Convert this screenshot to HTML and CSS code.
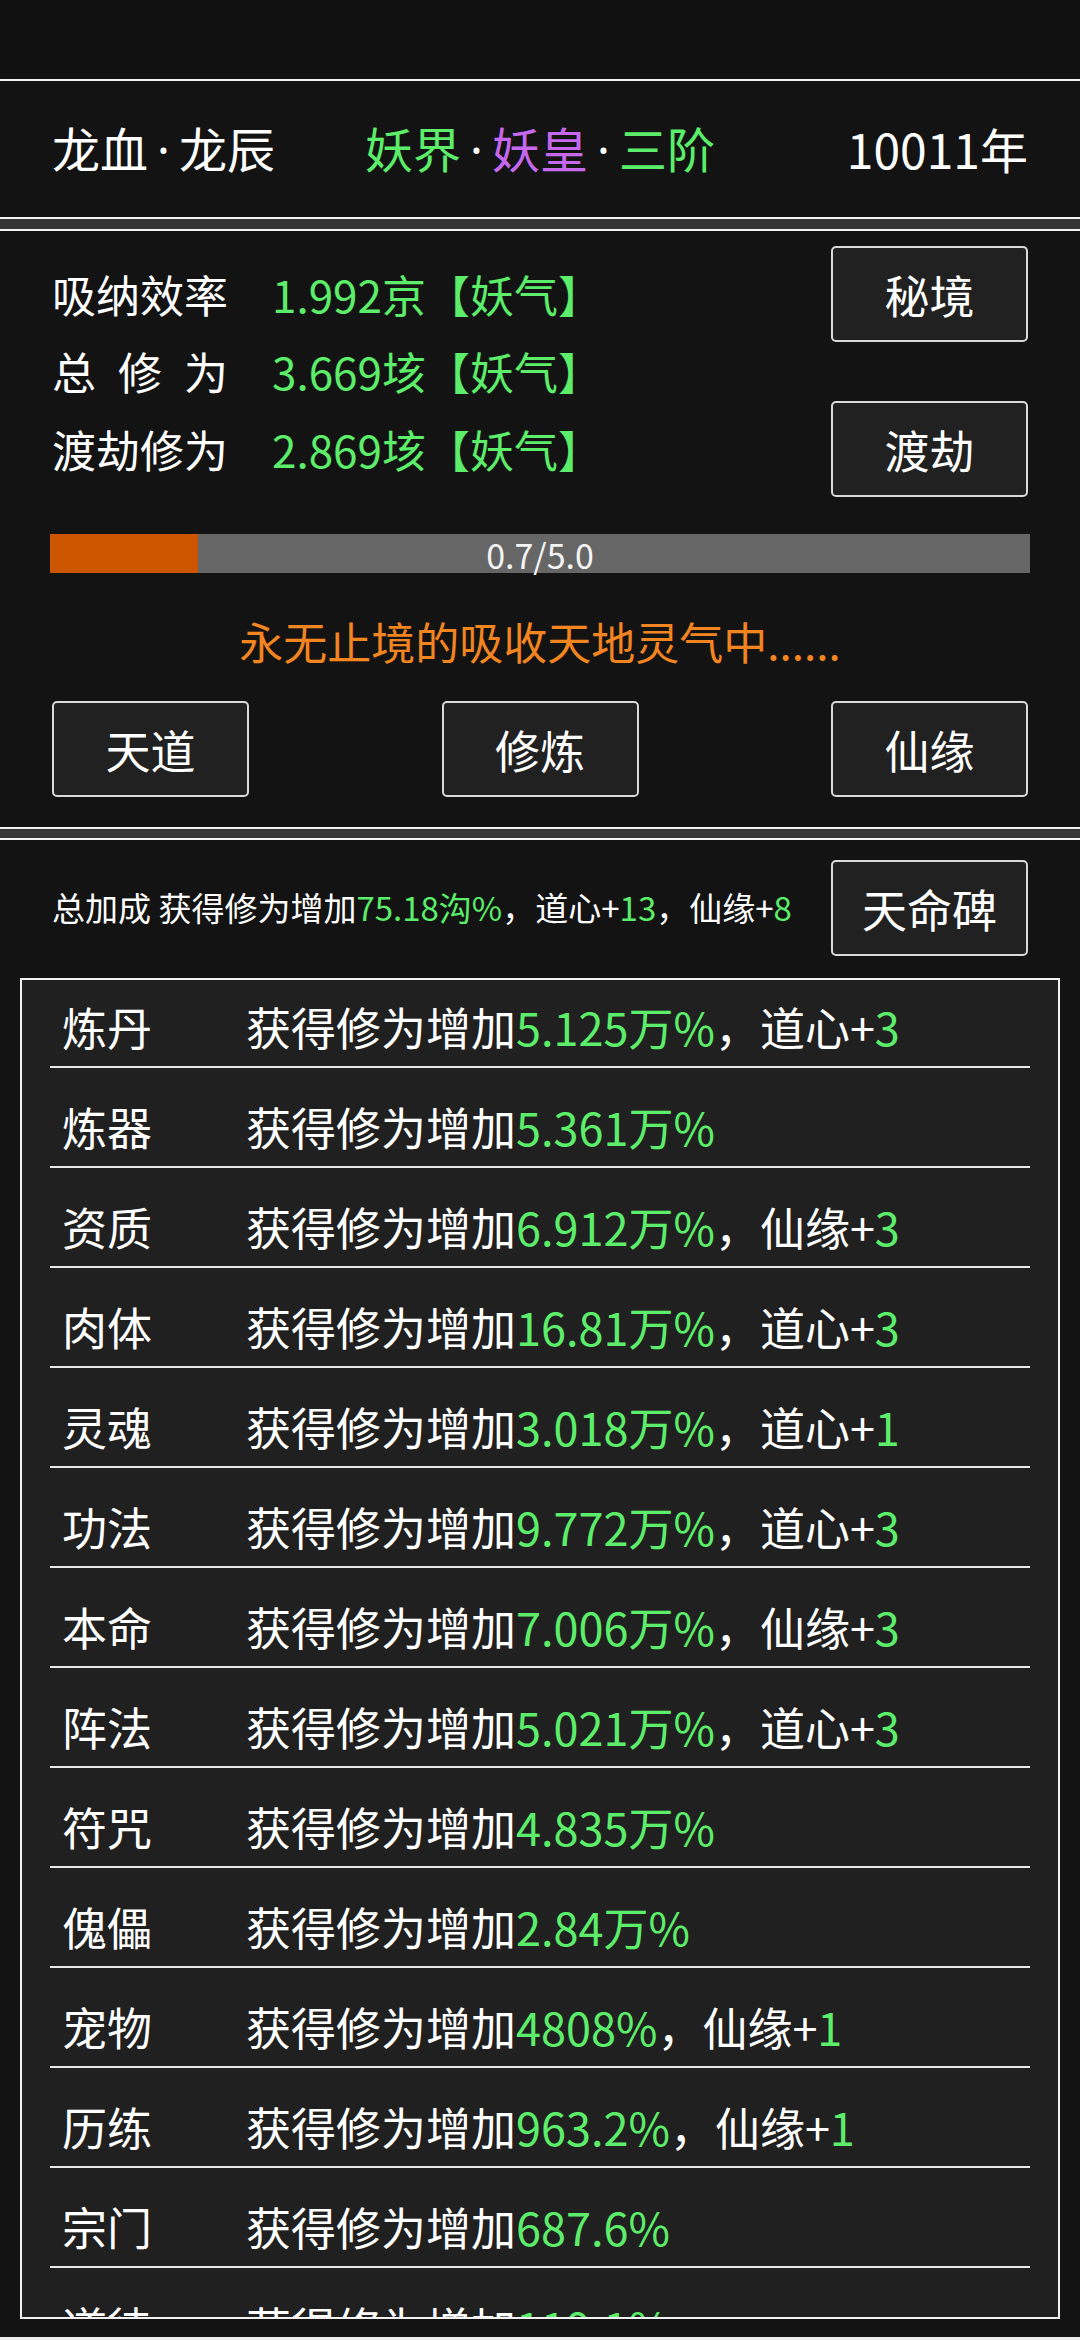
FILE: index.html
```html
<!DOCTYPE html>
<html lang="zh-CN">
<head>
<meta charset="utf-8">
<title>修仙</title>
<link rel="stylesheet" href="styles.css">
</head>
<body>
<div class="app">
  <div class="status"></div>

  <section class="panel head">
    <div class="head-left">龙血<span class="dot">·</span>龙辰</div>
    <div class="head-mid"><span class="g">妖界</span><span class="dot">·</span><span class="p">妖皇</span><span class="dot">·</span><span class="g">三阶</span></div>
    <div class="head-right">10011年</div>
  </section>

  <section class="panel main">
    <div class="stats">
      <div class="stat r1"><span class="lab">吸纳效率</span><span class="g">1.992京【妖气】</span></div>
      <div class="stat r2"><span class="lab just">总 修 为</span><span class="g">3.669垓【妖气】</span></div>
      <div class="stat r3"><span class="lab">渡劫修为</span><span class="g">2.869垓【妖气】</span></div>
      <button class="btn b1">秘境</button>
      <button class="btn b3">渡劫</button>
    </div>
    <div class="bar">
      <div class="bar-fill" style="width:15.1%"></div>
      <div class="bar-text">0.7/5.0</div>
    </div>
    <div class="msg">永无止境的吸收天地灵气中......</div>
    <div class="actions">
      <button class="btn">天道</button>
      <button class="btn">修炼</button>
      <button class="btn">仙缘</button>
    </div>
  </section>

  <section class="panel bonus">
    <div class="bonus-head">
      <div class="total">总加成 获得修为增加<span class="g">75.18沟%</span>，道心+<span class="g">13</span>，仙缘+<span class="g">8</span></div>
      <button class="btn">天命碑</button>
    </div>
    <div class="list">
      <div class="list-inner">
        <div class="row"><span class="name">炼丹</span><span class="desc">获得修为增加<span class="g">5.125万%</span>，道心+<span class="g">3</span></span></div>
        <div class="row"><span class="name">炼器</span><span class="desc">获得修为增加<span class="g">5.361万%</span></span></div>
        <div class="row"><span class="name">资质</span><span class="desc">获得修为增加<span class="g">6.912万%</span>，仙缘+<span class="g">3</span></span></div>
        <div class="row"><span class="name">肉体</span><span class="desc">获得修为增加<span class="g">16.81万%</span>，道心+<span class="g">3</span></span></div>
        <div class="row"><span class="name">灵魂</span><span class="desc">获得修为增加<span class="g">3.018万%</span>，道心+<span class="g">1</span></span></div>
        <div class="row"><span class="name">功法</span><span class="desc">获得修为增加<span class="g">9.772万%</span>，道心+<span class="g">3</span></span></div>
        <div class="row"><span class="name">本命</span><span class="desc">获得修为增加<span class="g">7.006万%</span>，仙缘+<span class="g">3</span></span></div>
        <div class="row"><span class="name">阵法</span><span class="desc">获得修为增加<span class="g">5.021万%</span>，道心+<span class="g">3</span></span></div>
        <div class="row"><span class="name">符咒</span><span class="desc">获得修为增加<span class="g">4.835万%</span></span></div>
        <div class="row"><span class="name">傀儡</span><span class="desc">获得修为增加<span class="g">2.84万%</span></span></div>
        <div class="row"><span class="name">宠物</span><span class="desc">获得修为增加<span class="g">4808%</span>，仙缘+<span class="g">1</span></span></div>
        <div class="row"><span class="name">历练</span><span class="desc">获得修为增加<span class="g">963.2%</span>，仙缘+<span class="g">1</span></span></div>
        <div class="row"><span class="name">宗门</span><span class="desc">获得修为增加<span class="g">687.6%</span></span></div>
        <div class="row"><span class="name">道徒</span><span class="desc">获得修为增加<span class="g">119.1%</span></span></div>
      </div>
    </div>
  </section>
</div>
</body>
</html>
```

FILE: styles.css
```css
* { box-sizing: border-box; }
html, body {
  margin: 0;
  padding: 0;
  background: #ececec;
}
body {
  font-family: "Noto Sans CJK SC", "Noto Sans", sans-serif;
  color: #ffffff;
}
.app {
  width: 1080px;
  height: 2337px;
  background: #363636;
  display: flex;
  flex-direction: column;
  overflow: hidden;
}
.status {
  height: 79px;
  background: #111111;
  flex: none;
}
.panel {
  background: #131313;
  border-top: 2px solid #f2f2f2;
  flex: none;
}
.g { color: #5ced6a; }
.p { color: #c668ee; }

/* header panel */
.head {
  height: 140px;
  border-bottom: 2px solid #f2f2f2;
  display: grid;
  grid-template-columns: 1fr auto 1fr;
  align-items: center;
  padding: 0 52px;
  font-size: 48px;
  line-height: 1.2;
}
.head-right { justify-self: end; }
.dot {
  display: inline-block;
  width: 31px;
  text-align: center;
  font-family: "Noto Sans", sans-serif;
  color: #ffffff;
}

/* main panel */
.main {
  margin-top: 10px;
  height: 600px;
  border-bottom: 2px solid #f2f2f2;
  padding: 15px 52px 0;
}
.stats {
  display: grid;
  grid-template-columns: 1fr 197px;
  grid-template-rows: 96px 59px 96px;
  font-size: 44px;
  line-height: 1.2;
}
.stat {
  display: flex;
  align-items: center;
  grid-column: 1;
}
.r1 { grid-row: 1; }
.r2 { grid-row: 2; }
.r3 { grid-row: 3; }
.b1 { grid-column: 2; grid-row: 1; }
.b3 { grid-column: 2; grid-row: 3; }
.lab {
  display: inline-block;
  width: 176px;
  margin-right: 44px;
  white-space: nowrap;
}
.lab.just {
  text-align: justify;
  text-align-last: justify;
  white-space: normal;
}

.btn {
  width: 197px;
  height: 96px;
  background: #212121;
  border: 2px solid #d9d9d9;
  border-radius: 5px;
  color: #ffffff;
  font-family: "Noto Sans CJK SC", "Noto Sans", sans-serif;
  font-size: 45px;
  line-height: 1;
  padding: 0;
  display: flex;
  align-items: center;
  justify-content: center;
}

.bar {
  position: relative;
  height: 39px;
  margin: 37px -2px 0;
  background: #666666;
}
.bar-fill {
  height: 100%;
  background: #cc5500;
}
.bar-text {
  position: absolute;
  left: 0;
  right: 0;
  top: 0;
  bottom: 0;
  display: flex;
  align-items: center;
  justify-content: center;
  font-size: 34px;
  color: #f4f4f4;
  line-height: 1;
  padding-top: 3px;
}
.msg {
  margin-top: 42px;
  text-align: center;
  color: #f2851f;
  font-size: 44px;
  line-height: 53px;
}
.actions {
  margin-top: 33px;
  display: flex;
  justify-content: space-between;
}

/* bonus panel */
.bonus {
  margin-top: 9px;
  flex: 1;
  display: flex;
  flex-direction: column;
  padding-top: 20px;
}
.bonus-head {
  display: flex;
  align-items: center;
  justify-content: space-between;
  padding: 0 52px;
}
.total {
  font-size: 33px;
  line-height: 1.2;
  white-space: nowrap;
}
.list {
  margin: 22px 20px 0;
  height: 1341px;
  border: 2px solid #f2f2f2;
  background: #202020;
  overflow: hidden;
}
.list-inner {
  margin-top: -12px;
}
.row {
  height: 100px;
  margin: 0 28px;
  border-bottom: 2px solid #e8e8e8;
  display: flex;
  align-items: center;
  padding: 20px 0 0 12px;
  font-size: 45px;
  line-height: 1.2;
  white-space: nowrap;
}
.name {
  width: 184px;
  flex: none;
}
```
